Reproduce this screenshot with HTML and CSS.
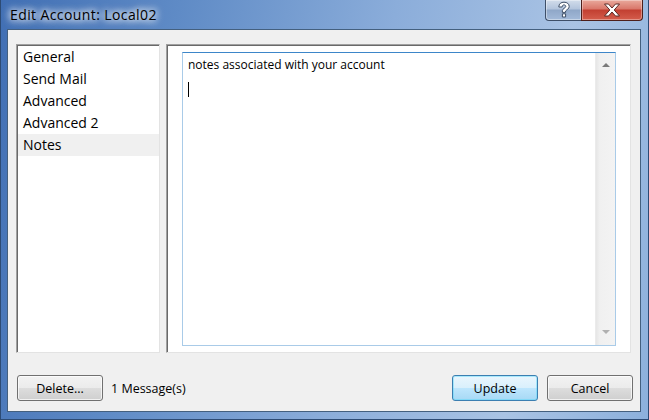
FILE: index.html
```html
<!DOCTYPE html>
<html lang="en">
<head>
    <meta charset="UTF-8">
    <title>Edit Account: Local02</title>
    <link rel="stylesheet" href="styles.css">
</head>
<body>

    <div class="window">
        <!-- Title bar -->
        <div class="titlebar">
            <span class="title">Edit Account: Local02</span>
            <div class="caption-buttons">
                <div class="cap-btn help">
                    <svg width="14" height="18" viewBox="0 0 14 18">
                        <path d="M1.8 6 C1.8 2.6 4.2 1.2 7 1.2 C10.2 1.2 12.2 3 12.2 5.5 C12.2 8 9.6 8.6 8.6 10 L8.6 11.4 L5.4 11.4 L5.4 9.6 C5.4 7.6 8.8 7 8.8 5.4 C8.8 4.4 8 3.9 7 3.9 C5.8 3.9 5.2 4.7 5.2 6 Z M5.4 12.8 L8.6 12.8 L8.6 16 L5.4 16 Z" fill="#fff" stroke="#3d4e66" stroke-width="1" stroke-linejoin="round"/>
                    </svg>
                </div>
                <div class="cap-btn close">
                    <svg width="18" height="14" viewBox="0 0 18 14">
                        <path d="M1.5 1 L5.5 1 L9 5 L12.5 1 L16.5 1 L11.2 7 L16.5 13 L12.5 13 L9 9 L5.5 13 L1.5 13 L6.8 7 Z" fill="#fff" stroke="#5b2a26" stroke-width="1" stroke-linejoin="round"/>
                    </svg>
                </div>
            </div>
        </div>

        <!-- Client area -->
        <div class="client">
            <div class="panes">
                <ul class="nav">
                    <li>General</li>
                    <li>Send Mail</li>
                    <li>Advanced</li>
                    <li>Advanced 2</li>
                    <li class="selected">Notes</li>
                </ul>
                <div class="page">
                    <div class="notes">
                        <div class="notes-text">
                            <div>notes associated with your account</div>
                            <span class="caret"></span>
                        </div>
                        <div class="scrollbar">
                            <span class="arrow up"></span>
                            <span class="arrow down"></span>
                        </div>
                    </div>
                </div>
            </div>

            <div class="footer">
                <button class="btn">Delete...</button>
                <span class="count">1 Message(s)</span>
                <span class="spacer"></span>
                <button class="btn default">Update</button>
                <button class="btn">Cancel</button>
            </div>
        </div>
    </div>

</body>
</html>
```

FILE: styles.css
```css
* {
    margin: 0;
    padding: 0;
    box-sizing: border-box;
}

body {
    font-family: "Open Sans", "Noto Sans", sans-serif;
    background-color: #6f95c8;
    width: 649px;
    height: 420px;
    overflow: hidden;
}

.window {
    width: 649px;
    height: 420px;
    padding: 0 7px 7px 6px;
    display: flex;
    flex-direction: column;
    background: linear-gradient(100deg, #416fb4 0%, #5f8bc6 25%, #8badda 55%, #a9c3e4 80%, #8cb0dc 100%);
    border: 1px solid #2d4b74;
    border-top: none;
}

/* Title bar */
.titlebar {
    height: 29px;
    display: flex;
    justify-content: space-between;
    align-items: flex-start;
    flex-shrink: 0;
}

.title {
    margin-top: 5px;
    margin-left: 3px;
    font-size: 14px;
    letter-spacing: 0.4px;
    color: #000;
    text-shadow: 0 0 6px #fff, 0 0 8px #fff, 0 0 10px rgba(255, 255, 255, 0.8);
}

.caption-buttons {
    display: flex;
    margin-right: -2px;
}

.cap-btn {
    height: 21px;
    display: flex;
    justify-content: center;
    align-items: center;
    border: 1px solid #3e4f68;
    border-top: none;
}

.cap-btn.help {
    width: 36px;
    border-right: none;
    border-bottom-left-radius: 4px;
    background: linear-gradient(#d2ddeb 0%, #b3c4dc 45%, #8fa7c8 50%, #a3bad9 100%);
    box-shadow: inset 0 0 0 1px rgba(255, 255, 255, 0.4);
}

.cap-btn.close {
    width: 62px;
    border-color: #4d1f1b;
    border-bottom-right-radius: 4px;
    background: linear-gradient(#e9a99c 0%, #d9776a 45%, #c23f31 50%, #d45d4c 100%);
    box-shadow: inset 0 0 0 1px rgba(255, 255, 255, 0.35);
}

/* Client area */
.client {
    flex: 1;
    background-color: #f0f0f0;
    border: 1px solid #44607f;
    padding: 14px 9px 0 8px;
    display: flex;
    flex-direction: column;
}

.panes {
    display: flex;
    gap: 6px;
    height: 309px;
}

.nav {
    list-style: none;
    width: 144px;
    background-color: #fff;
    border: 1px solid;
    border-color: #a0a0a0 #e3e3e3 #e3e3e3 #a0a0a0;
    box-shadow: inset 1px 1px 0 #696969;
    padding: 1px 0 0 1px;
}

.nav li {
    height: 22px;
    line-height: 22px;
    padding-left: 5px;
    font-size: 14px;
    color: #000;
}

.nav li.selected {
    background-color: #f0f0f0;
}

.page {
    flex: 1;
    background-color: #fff;
    border: 1px solid;
    border-color: #a0a0a0 #e3e3e3 #e3e3e3 #a0a0a0;
    box-shadow: inset 1px 1px 0 #696969;
    padding: 7px 14px 6px 15px;
}

.notes {
    height: 100%;
    display: flex;
    border: 1px solid;
    border-color: #3d86c9 #a9cbe8 #a9cbe8 #a9cbe8;
}

.notes-text {
    flex: 1;
    padding: 3px 0 0 5px;
    font-size: 12px;
    color: #000;
}

.caret {
    display: block;
    width: 1px;
    height: 15px;
    margin-top: 9px;
    background-color: #000;
}

.scrollbar {
    width: 20px;
    background: linear-gradient(to right, #e6e6e6 0%, #f0f0f0 20%, #f3f3f3 100%);
    border-left: 1px solid #ebebeb;
    display: flex;
    flex-direction: column;
    justify-content: space-between;
    align-items: center;
    padding: 10px 0 11px;
}

.arrow {
    width: 0;
    height: 0;
    border-left: 4px solid transparent;
    border-right: 4px solid transparent;
}

.arrow.up {
    border-bottom: 4px solid #7a7a7a;
}

.arrow.down {
    border-top: 4px solid #b0b0b0;
}

/* Footer */
.footer {
    display: flex;
    align-items: center;
    margin-top: 22px;
    padding-left: 1px;
    margin-right: -2px;
}

.btn {
    width: 86px;
    height: 26px;
    font-family: inherit;
    font-size: 12.5px;
    color: #000;
    border: 1px solid #707070;
    border-radius: 3px;
    background: linear-gradient(#f2f2f2 0%, #ebebeb 50%, #dddddd 50%, #cfcfcf 100%);
    box-shadow: inset 0 0 0 1px rgba(255, 255, 255, 0.7);
}

.btn.default {
    border-color: #3c7fb1;
    background: linear-gradient(#eaf6fd 0%, #d9f0fc 50%, #bee6fd 50%, #a7d9f5 100%);
    box-shadow: inset 0 0 0 1px #48d8fb66;
    margin-right: 9px;
}

.count {
    margin-left: 8px;
    font-size: 12.5px;
    color: #000;
}

.spacer {
    flex: 1;
}
```
